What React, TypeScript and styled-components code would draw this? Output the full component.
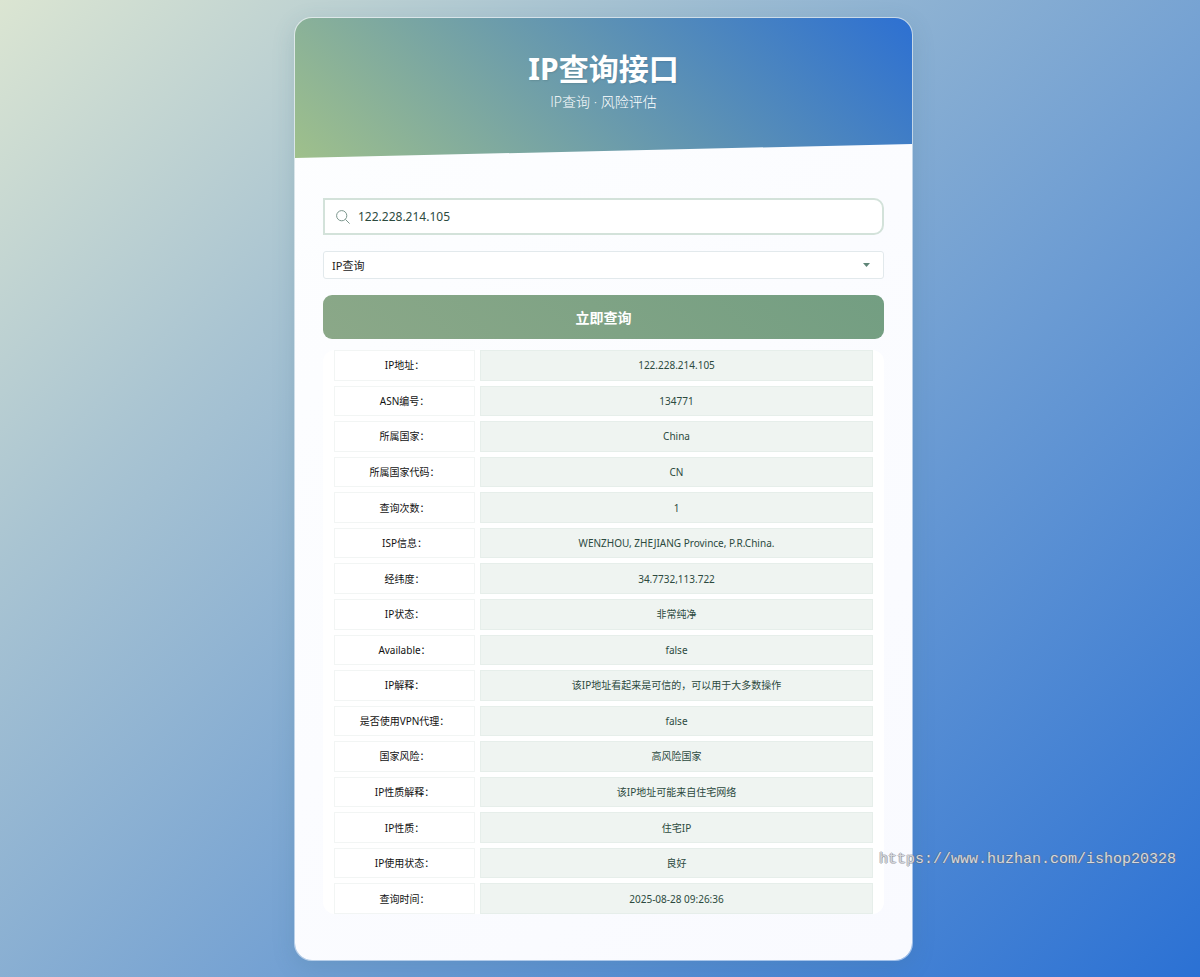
import React, { useState } from 'react';
import styled, { createGlobalStyle } from 'styled-components';

const GlobalStyle = createGlobalStyle`
  *, *::before, *::after { box-sizing: border-box; }
  html { min-height: 100%; }
  body {
    margin: 0;
    min-height: 100vh;
    font-family: 'Noto Sans', 'Noto Sans CJK SC', sans-serif;
    color: #2c4a3e;
  }
`;

const Page = styled.div`
  position: relative;
  min-height: 100vh;
  padding: 17px 0 17px 7px;
  background: linear-gradient(135deg, #dbe5d2 0%, #a9c4d2 26%, #2b71d4 100%);
`;

const Card = styled.main`
  max-width: 619px;
  margin: 0 auto;
  border: 1px solid rgba(255, 255, 255, 0.5);
  border-radius: 18px;
  overflow: hidden;
  background: linear-gradient(135deg, #fdfeff, #f9faff);
  background-clip: padding-box;
  box-shadow: 0 6px 22px rgba(60, 110, 130, 0.18);
`;

const Header = styled.header`
  padding: 32px 24px 42px;
  text-align: center;
  color: #ffffff;
  background: linear-gradient(45deg, #9fc08b 0%, #2d70d2 100%);
  clip-path: polygon(0 0, 100% 0, 100% 90%, 0 100%);
`;

const Title = styled.h1`
  margin: 0;
  font-size: 30px;
  line-height: 38px;
  font-weight: 700;
  text-shadow: 1px 1px 2px rgba(0, 0, 0, 0.1);
`;

const Subtitle = styled.p`
  margin: 0;
  font-family: 'Open Sans', 'Noto Sans CJK SC', sans-serif;
  font-size: 14px;
  line-height: 28px;
  font-weight: 300;
`;

const Content = styled.div`
  padding: 40px 28px 46px;
`;

const Form = styled.form`
  display: flex;
  flex-direction: column;
  gap: 16px;
  margin-bottom: 11px;
`;

const SearchField = styled.label`
  display: flex;
  align-items: center;
  gap: 8px;
  height: 37px;
  padding: 0 11px;
  border: 2px solid #d3e2da;
  border-radius: 0 10px 10px 0;
  background: #ffffff;
`;

const SearchInput = styled.input`
  flex: 1;
  min-width: 0;
  padding: 0;
  border: 0;
  outline: 0;
  background: transparent;
  color: #2c4a3e;
  font-family: inherit;
  font-size: 12px;
  line-height: 20px;
`;

const SelectField = styled.label`
  display: grid;
  align-items: center;

  > * { grid-area: 1 / 1; }
  > svg { justify-self: end; margin-right: 14px; pointer-events: none; }
`;

const Select = styled.select`
  appearance: none;
  width: 100%;
  height: 28px;
  padding: 0 8px;
  border: 1px solid #e2e9ec;
  border-radius: 3px;
  background: #ffffff;
  color: #222222;
  font-family: inherit;
  font-size: 11px;
`;

const SubmitButton = styled.button`
  height: 44px;
  border: 0;
  border-radius: 9px;
  color: #ffffff;
  background: linear-gradient(45deg, #8ba888, #739e82);
  font-family: inherit;
  font-size: 14px;
  font-weight: 700;
`;

const Results = styled.table`
  display: block;
  padding: 0 11px;
  border-radius: 12px;
  background: #ffffff;
`;

const ResultRows = styled.tbody`
  display: grid;
  grid-auto-rows: 1fr;
  gap: 5px;
  min-height: 564px;
`;

const ResultRow = styled.tr`
  display: grid;
  grid-template-columns: 141px 1fr;
  gap: 5px;
  font-size: 10px;
  line-height: 16px;
`;

const Label = styled.th`
  display: flex;
  align-items: center;
  justify-content: center;
  padding: 0 8px;
  border: 1px solid #f2f5f4;
  font-weight: 400;
  color: #111111;
`;

const Value = styled.td`
  display: flex;
  align-items: center;
  justify-content: center;
  padding: 0 8px;
  border: 1px solid #e6eeea;
  background: #eff4f1;
  color: #2c4a3e;
`;

const Watermark = styled.div`
  position: absolute;
  right: 24px;
  bottom: 108px;
  font-family: 'Liberation Mono', monospace;
  font-size: 15px;
  line-height: 20px;
  color: #d6d8dc;
  text-shadow: 1px 0 0 rgba(100, 104, 112, 0.5), -1px 0 0 rgba(100, 104, 112, 0.4),
    0 1px 0 rgba(100, 104, 112, 0.4), 0 -1px 0 rgba(100, 104, 112, 0.3);
  pointer-events: none;
`;

const rows: [string, string][] = [
  ['IP地址：', '122.228.214.105'],
  ['ASN编号：', '134771'],
  ['所属国家：', 'China'],
  ['所属国家代码：', 'CN'],
  ['查询次数：', '1'],
  ['ISP信息：', 'WENZHOU, ZHEJIANG Province, P.R.China.'],
  ['经纬度：', '34.7732,113.722'],
  ['IP状态：', '非常纯净'],
  ['Available：', 'false'],
  ['IP解释：', '该IP地址看起来是可信的，可以用于大多数操作'],
  ['是否使用VPN代理：', 'false'],
  ['国家风险：', '高风险国家'],
  ['IP性质解释：', '该IP地址可能来自住宅网络'],
  ['IP性质：', '住宅IP'],
  ['IP使用状态：', '良好'],
  ['查询时间：', '2025-08-28 09:26:36'],
];

const SearchIcon = () => (
  <svg width="14" height="14" viewBox="0 0 14 14" fill="none" stroke="#7b958c" aria-hidden="true">
    <circle cx="5.7" cy="5.7" r="5.1" />
    <path d="M9.4 9.4 13.6 13.6" />
  </svg>
);

const CaretIcon = () => (
  <svg width="7" height="4" viewBox="0 0 7 4" aria-hidden="true">
    <path d="M0 0h7L3.5 4z" fill="#5f8577" />
  </svg>
);

export default function App() {
  const [ip, setIp] = useState('122.228.214.105');

  return (
    <>
      <GlobalStyle />
      <Page>
        <Card>
          <Header>
            <Title>IP查询接口</Title>
            <Subtitle>IP查询 · 风险评估</Subtitle>
          </Header>
          <Content>
            <Form onSubmit={(e) => e.preventDefault()}>
              <SearchField>
                <SearchIcon />
                <SearchInput
                  type="text"
                  aria-label="IP地址"
                  value={ip}
                  onChange={(e) => setIp(e.target.value)}
                />
              </SearchField>
              <SelectField>
                <Select aria-label="IP查询" defaultValue="ip">
                  <option value="ip">IP查询</option>
                </Select>
                <CaretIcon />
              </SelectField>
              <SubmitButton type="submit">立即查询</SubmitButton>
            </Form>
            <Results>
              <ResultRows>
                {rows.map(([label, value]) => (
                  <ResultRow key={label}>
                    <Label scope="row">{label}</Label>
                    <Value>{value}</Value>
                  </ResultRow>
                ))}
              </ResultRows>
            </Results>
          </Content>
        </Card>
        <Watermark>https://www.huzhan.com/ishop20328</Watermark>
      </Page>
    </>
  );
}
